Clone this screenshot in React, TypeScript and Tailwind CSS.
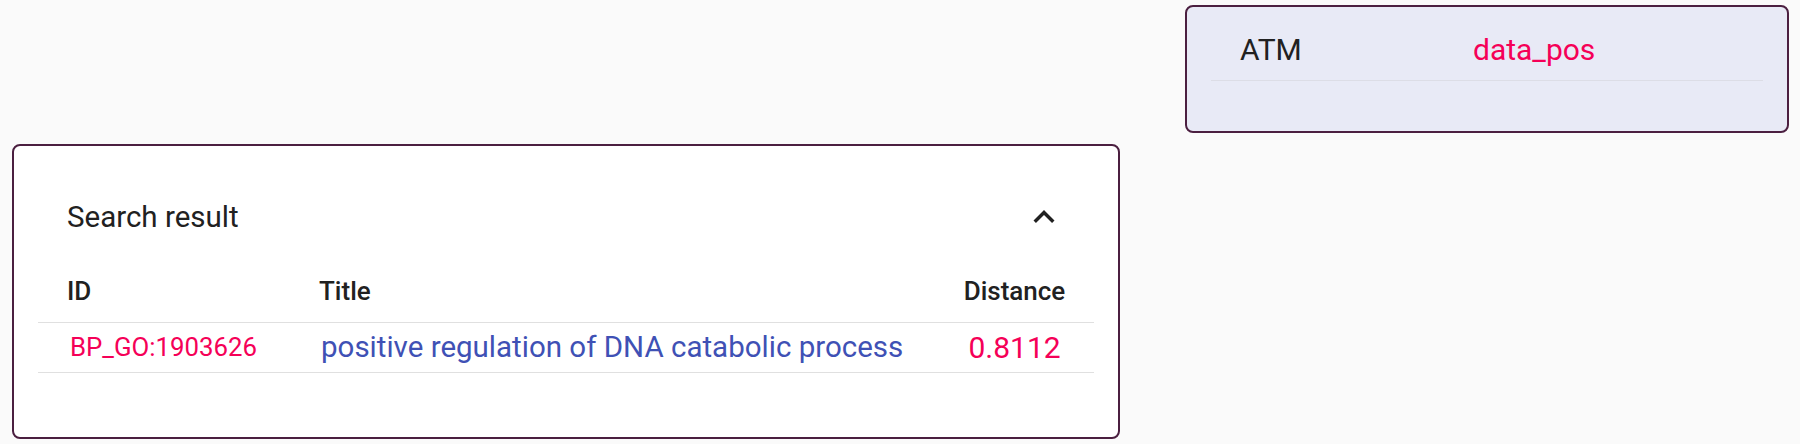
export default function App() {
  return (
    <div className="min-h-screen w-full bg-[#fafafa] font-['Roboto',sans-serif] text-[#212121]">
      <div className="flex justify-end pt-[5px] pr-[11px]">
        <div className="w-[604px] h-[128px] rounded-lg border-2 border-[#4b1f40] bg-[#e8eaf6] px-[24px] pt-[11px]">
          <div className="grid grid-cols-[233px_316px] h-[63px] items-center border-b border-[#dcdde6]">
            <div className="pl-[29px] text-[30px]">ATM</div>
            <div className="pl-[29px] text-[30px] text-[#f50057]">data_pos</div>
          </div>
        </div>
      </div>

      <div className="ml-[12px] mt-[11px] w-[1108px] h-[295px] rounded-lg border-2 border-[#4b1f40] bg-white">
        <div className="mt-[50px] h-[42px] px-[53px] flex items-center justify-between">
          <span className="text-[29.5px]">Search result</span>
          <svg width="42" height="42" viewBox="0 0 24 24" fill="#212121">
            <path d="M12 8l-6 6 1.41 1.41L12 10.83l4.59 4.58L18 14z" />
          </svg>
        </div>

        <div className="mt-[22px] mx-[24px]">
          <div className="grid grid-cols-[252px_645px_159px] h-[63px] items-center border-b border-[#e0e0e0] text-[26px] font-medium">
            <div className="pl-[29px]">ID</div>
            <div className="pl-[29px]">Title</div>
            <div className="text-center">Distance</div>
          </div>
          <div className="grid grid-cols-[252px_645px_159px] h-[50px] items-center border-b border-[#e0e0e0] whitespace-nowrap">
            <div className="pl-[32px] text-[25.8px] text-[#f50057]">BP_GO:1903626</div>
            <div className="pl-[31px] text-[29.5px] text-[#3f51b5]">positive regulation of DNA catabolic process</div>
            <div className="text-center text-[30px] text-[#f50057]">0.8112</div>
          </div>
        </div>
      </div>
    </div>
  );
}
